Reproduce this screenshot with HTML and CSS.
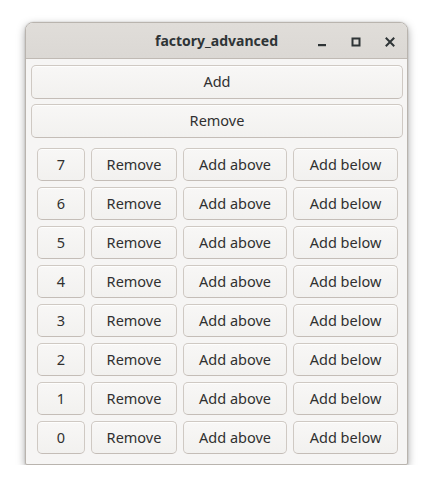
FILE: index.html
```html
<!DOCTYPE html>
<html>
<head>
<meta charset="utf-8">
<link rel="stylesheet" href="styles.css">
</head>
<body>
<div class="window">
  <div class="titlebar">
    <div class="title">factory_advanced</div>
    <div class="controls">
      <span class="ctl"><svg width="10" height="10" viewBox="0 0 10 10"><rect x="1" y="7" width="8" height="2.2" fill="#2e3436"/></svg></span>
      <span class="ctl"><svg width="10" height="10" viewBox="0 0 10 10"><rect x="1.5" y="1.5" width="7" height="7" fill="none" stroke="#2e3436" stroke-width="2"/></svg></span>
      <span class="ctl"><svg width="10" height="10" viewBox="0 0 10 10"><path d="M1.5 1.5 L8.5 8.5 M8.5 1.5 L1.5 8.5" stroke="#2e3436" stroke-width="2" stroke-linecap="square"/></svg></span>
    </div>
  </div>
  <div class="content">
    <button class="btn wide">Add</button>
    <button class="btn wide">Remove</button>
    <div class="grid">
      <button class="btn row">7</button><button class="btn row">Remove</button><button class="btn row">Add above</button><button class="btn row">Add below</button>
      <button class="btn row">6</button><button class="btn row">Remove</button><button class="btn row">Add above</button><button class="btn row">Add below</button>
      <button class="btn row">5</button><button class="btn row">Remove</button><button class="btn row">Add above</button><button class="btn row">Add below</button>
      <button class="btn row">4</button><button class="btn row">Remove</button><button class="btn row">Add above</button><button class="btn row">Add below</button>
      <button class="btn row">3</button><button class="btn row">Remove</button><button class="btn row">Add above</button><button class="btn row">Add below</button>
      <button class="btn row">2</button><button class="btn row">Remove</button><button class="btn row">Add above</button><button class="btn row">Add below</button>
      <button class="btn row">1</button><button class="btn row">Remove</button><button class="btn row">Add above</button><button class="btn row">Add below</button>
      <button class="btn row">0</button><button class="btn row">Remove</button><button class="btn row">Add above</button><button class="btn row">Add below</button>
    </div>
  </div>
</div>
</body>
</html>
```
FILE: styles.css
```css
html, body {
  margin: 0;
  padding: 0;
  background: #ffffff;
}
body {
  padding: 22px 0 0 25px;
  font-family: "Noto Sans", "DejaVu Sans", sans-serif;
  color: #2e3436;
}
.window {
  width: 383px;
  height: 443px;
  box-sizing: border-box;
  border: 1px solid #b9b4ae;
  border-radius: 8px 8px 2px 2px;
  background: #f6f5f4;
  box-shadow: 0 3px 9px rgba(0,0,0,0.35), 0 0 0 1px rgba(0,0,0,0.04);
  overflow: hidden;
  display: flex;
  flex-direction: column;
}
.titlebar {
  height: 35px;
  flex: none;
  background: linear-gradient(#e0ddd9, #dbd8d4);
  border-bottom: 1px solid #c0bab4;
  position: relative;
  display: flex;
  align-items: center;
  justify-content: center;
}
.title {
  font-weight: bold;
  font-size: 14px;
  color: #2e3436;
  margin-top: -1px;
}
.controls {
  position: absolute;
  right: 12px;
  top: 14px;
  display: flex;
  gap: 24px;
}
.ctl {
  display: block;
  width: 10px;
  height: 10px;
}
.ctl svg { display: block; }
.content {
  padding: 6px 4px 0 5px;
  display: flex;
  flex-direction: column;
  gap: 5px;
}
.btn {
  font-family: "Noto Sans", "DejaVu Sans", sans-serif;
  font-size: 14.5px;
  color: #303030;
  background: linear-gradient(#f8f7f6, #f2f1ef);
  border: 1px solid #cfc9c3;
  border-bottom-color: #c4bdb7;
  border-radius: 5px;
  padding: 0 0 2px 0;
  margin: 0;
  box-sizing: border-box;
  box-shadow: inset 0 1px rgba(255,255,255,0.8);
}
.wide {
  height: 34px;
  width: 372px;
}
.grid {
  margin: 5px 0 0 6px;
  display: grid;
  grid-template-columns: 48px 86px 104px 105px;
  grid-auto-rows: 33px;
  column-gap: 6px;
  row-gap: 6px;
}
.row {
  height: 33px;
}
```
